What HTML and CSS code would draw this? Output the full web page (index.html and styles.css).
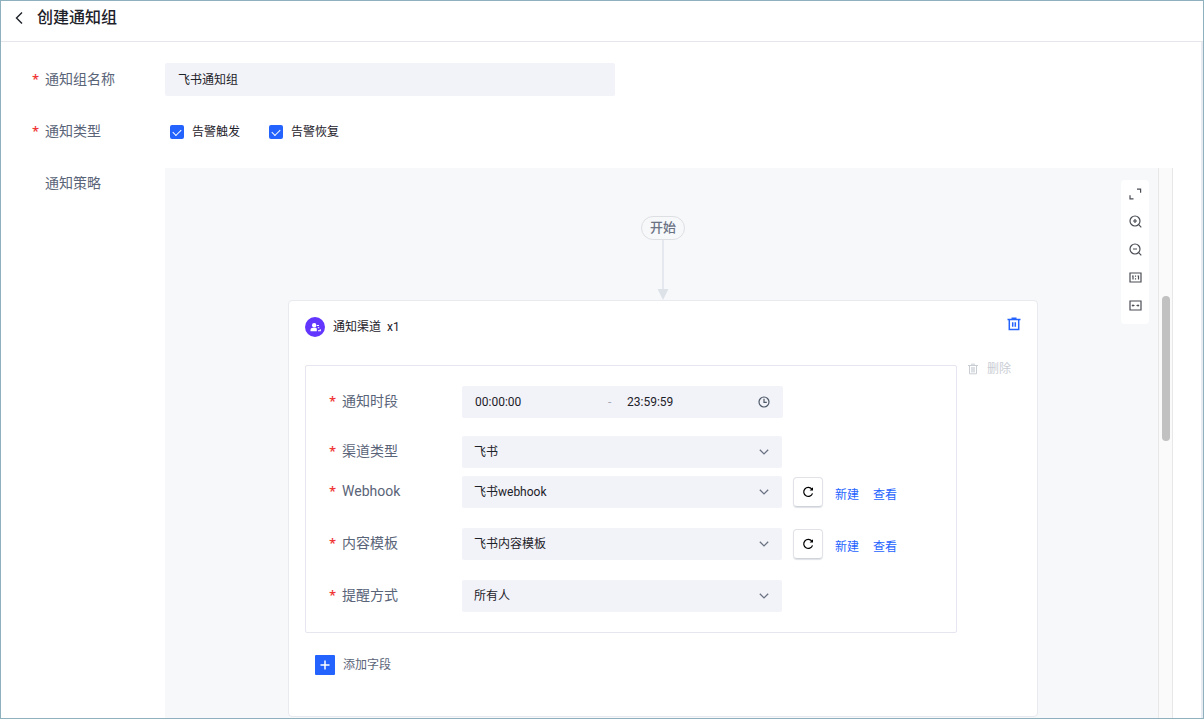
FILE: index.html
```html
<!DOCTYPE html>
<html lang="zh-CN">
<head>
<meta charset="utf-8">
<meta name="viewport" content="width=device-width, initial-scale=1">
<title>创建通知组</title>
<link rel="stylesheet" href="styles.css">
</head>
<body>
<div class="page">
  <header class="header">
    <button class="icon-btn back" type="button" aria-label="返回">
      <svg width="10" height="14" viewBox="0 0 10 14" fill="none" stroke="#1d2129" stroke-width="1.4"><path d="M8 1.5 2.5 7 8 12.500"/></svg>
    </button>
    <h1 class="title">创建通知组</h1>
  </header>

  <main class="form">
    <label class="label required" for="group-name">通知组名称</label>
    <input class="field name-field" id="group-name" type="text" value="飞书通知组">

    <span class="label required" id="type-label">通知类型</span>
    <div class="checks" role="group" aria-labelledby="type-label">
      <label class="check"><input type="checkbox" checked>告警触发</label>
      <label class="check"><input type="checkbox" checked>告警恢复</label>
    </div>

    <span class="label policy-label">通知策略</span>
    <div class="policy">
      <section class="canvas">
        <div class="start">开始</div>
        <svg class="arrow" width="12" height="60" viewBox="0 0 12 60"><path d="M6 0v50" stroke="#e5e8ef" stroke-width="2"/><path d="M.5 49h11L6 60z" fill="#dde2e9"/></svg>

        <article class="card">
          <div class="card-head">
            <svg width="20" height="20" viewBox="0 0 20 20"><circle cx="10" cy="10" r="10" fill="#6236ff"/><circle cx="9.200" cy="8.200" r="2.200" fill="#fff"/><path d="M5.500 14.200v-1.200c0-1.500 1-2.300 2.500-2.300h2c1.100 0 1.800.5 1.800 1.200v2.300z" fill="#fff"/><path d="M12 8.500h2M12.800 10.700h1.500M13 13.700h2.300v-1.500" stroke="#fff" stroke-width="1.100" fill="none"/></svg>
            <h2 class="card-title">通知渠道&nbsp; x1</h2>
            <button class="icon-btn remove-card" type="button" aria-label="删除通知渠道">
              <svg width="14" height="14" viewBox="0 0 14 14" fill="none" stroke="#2563ff" stroke-width="1.500"><path d="M.5 2.500h13M4.500 1.200h5M2.300 2.500v10h9.400v-10M5.700 5.200v4.600M8.300 5.200v4.600"/></svg>
            </button>
          </div>

          <div class="card-body">
            <div class="channel">
              <div class="row row-time">
                <label class="label required" for="time-from">通知时段</label>
                <div class="field time">
                  <input id="time-from" type="text" value="00:00:00">
                  <span class="dash">-</span>
                  <input type="text" value="23:59:59" aria-label="结束时间">
                  <svg width="12" height="12" viewBox="0 0 12 12" fill="none" stroke="#4e5969" stroke-width="1.200"><circle cx="6" cy="6" r="5"/><path d="M6 2.800V6.300h2.800"/></svg>
                </div>
              </div>
              <div class="row row-type">
                <label class="label required" for="channel-type">渠道类型</label>
                <div class="select">
                  <select class="field" id="channel-type"><option>飞书</option></select>
                  <svg class="chevron" width="10" height="6" viewBox="0 0 10 6"><path d="M.8.7 5 4.900 9.200.7"/></svg>
                </div>
              </div>
              <div class="row">
                <label class="label required" for="webhook">Webhook</label>
                <div class="select">
                  <select class="field" id="webhook"><option>飞书webhook</option></select>
                  <svg class="chevron" width="10" height="6" viewBox="0 0 10 6"><path d="M.8.7 5 4.900 9.200.7"/></svg>
                </div>
                <button class="refresh" type="button" aria-label="刷新">
                  <svg width="12" height="12" viewBox="0 0 12 12"><path d="M9.800 3.200A4.500 4.500 0 1 0 10.500 7.400" fill="none" stroke="#000" stroke-width="1.200"/><path d="M11 1.200v3.400H7.600z"/></svg>
                </button>
                <div class="links"><a href="#">新建</a><a href="#">查看</a></div>
              </div>
              <div class="row">
                <label class="label required" for="template">内容模板</label>
                <div class="select">
                  <select class="field" id="template"><option>飞书内容模板</option></select>
                  <svg class="chevron" width="10" height="6" viewBox="0 0 10 6"><path d="M.8.7 5 4.900 9.200.7"/></svg>
                </div>
                <button class="refresh" type="button" aria-label="刷新">
                  <svg width="12" height="12" viewBox="0 0 12 12"><path d="M9.800 3.200A4.500 4.500 0 1 0 10.500 7.400" fill="none" stroke="#000" stroke-width="1.200"/><path d="M11 1.200v3.400H7.600z"/></svg>
                </button>
                <div class="links"><a href="#">新建</a><a href="#">查看</a></div>
              </div>
              <div class="row">
                <label class="label required" for="remind">提醒方式</label>
                <div class="select">
                  <select class="field" id="remind"><option>所有人</option></select>
                  <svg class="chevron" width="10" height="6" viewBox="0 0 10 6"><path d="M.8.7 5 4.900 9.200.7"/></svg>
                </div>
              </div>
            </div>
            <button class="remove-row" type="button" disabled>
              <svg width="12" height="12" viewBox="0 0 12 12"><path d="M1 2.500h10M4 1.200h4M2.500 2.500v8.300h7V2.500" fill="none" stroke="#c9cdd4"/><path d="M4 4h4v5.500H4z" fill="#dcdfe4"/></svg>
              删除
            </button>
          </div>

          <button class="add" type="button">
            <svg width="20" height="20" viewBox="0 0 20 20"><rect width="20" height="20" rx="1" fill="#2563ff"/><path d="M5.500 10h9M10 5.500v9" stroke="#fff" stroke-width="1.500"/></svg>
            添加字段
          </button>
        </article>

        <div class="tools">
          <button class="icon-btn" type="button" aria-label="全屏"><svg width="14" height="14" viewBox="0 0 14 14"><path d="M9 2.200h3.600v3.600M5.500 11.800H2V8.200"/></svg></button>
          <button class="icon-btn" type="button" aria-label="放大"><svg width="14" height="14" viewBox="0 0 14 14"><circle cx="7" cy="6" r="5"/><path d="m10.700 9.700 2.600 2.600M5 6h4M7 4v4"/></svg></button>
          <button class="icon-btn" type="button" aria-label="缩小"><svg width="14" height="14" viewBox="0 0 14 14"><circle cx="7" cy="6" r="5"/><path d="m10.700 9.700 2.600 2.600M5 6h4"/></svg></button>
          <button class="icon-btn" type="button" aria-label="实际大小"><svg width="14" height="14" viewBox="0 0 14 14"><path d="M2 2h11v9H2zM4 5h1v3.500M9.500 5h1v3.500M7.500 4.500v1.200M7.500 7.300v1.200"/></svg></button>
          <button class="icon-btn" type="button" aria-label="适应画布"><svg width="14" height="14" viewBox="0 0 14 14"><path d="M2 2h11v9H2zM4 6.500h2.500M8.500 6.500H11"/><path class="solid" d="M3.500 6.500l1.800-1.500v3zM11.500 6.500 9.700 5v3z"/></svg></button>
        </div>
      </section>
      <div class="track"><div class="thumb"></div></div>
    </div>
  </main>
</div>
</body>
</html>
```
FILE: styles.css
```css
* {
  box-sizing: border-box;
}

body {
  margin: 0;
  font: 12px/20px Roboto, "Noto Sans CJK SC", sans-serif;
  color: #1d2129;
  background: #fff;
}

button,
input,
select {
  font: inherit;
  color: inherit;
}

button {
  padding: 0;
  border: 0;
  background: none;
}

svg {
  display: block;
  flex: none;
}

.page {
  display: flex;
  flex-direction: column;
  min-height: 100vh;
  border: 1px solid #8fb0bd;
}

.header {
  display: flex;
  align-items: center;
  gap: 13px;
  padding: 5px 13px 11px;
  border-bottom: 1px solid #e5e6eb;
}

.icon-btn {
  display: flex;
  align-items: center;
  justify-content: center;
}

.title {
  margin: 0;
  font-size: 16px;
  line-height: 24px;
  font-weight: 500;
}

.form {
  flex: 1;
  display: grid;
  grid-template-columns: 134px minmax(0, 1fr);
  grid-template-rows: auto auto 1fr;
  align-items: center;
  padding: 21px 28px 0 30px;
  border-right: 2px solid #e9ebf3;
}

.label {
  padding: 0 0 2px 14px;
  font-size: 14px;
  line-height: 20px;
  color: #5a6478;
  position: relative;
}

.required::before {
  content: "*";
  position: absolute;
  left: 1px;
  top: 0;
  font-family: "Open Sans", sans-serif;
  font-weight: 600;
  font-size: 13px;
  color: #f03535;
}

.field {
  height: 32px;
  border: 0;
  border-radius: 2px;
  background: #f2f3f8;
  padding: 0 12px;
}

.name-field {
  width: 450px;
  max-width: 100%;
  height: 33px;
  padding: 0 13px 2px;
}

.checks {
  display: flex;
  gap: 29px;
  padding: 26px 5px;
}

.check {
  display: flex;
  align-items: center;
  gap: 8px;
}

.check input {
  appearance: none;
  width: 14px;
  height: 14px;
  margin: 0;
  border-radius: 2px;
  background: #2563ff;
  display: grid;
  place-items: center;
}

.check input:checked::before {
  content: "";
  width: 7px;
  height: 4px;
  margin-bottom: 1px;
  border: solid #fff;
  border-width: 0 0 1px 1px;
  transform: rotate(-45deg);
}

.policy-label {
  align-self: start;
  padding-top: 5px;
}

.policy {
  align-self: stretch;
  display: flex;
}

.canvas {
  flex: 1;
  min-width: 0;
  position: relative;
  display: flex;
  flex-direction: column;
  align-items: center;
  padding: 48px 0 0 3px;
  background: #f7f8fa;
}

.start {
  padding: 0 8px;
  border: 1px solid #dddfe3;
  border-radius: 12px;
  font-size: 13px;
  line-height: 22px;
  font-weight: 500;
  color: #6b7385;
}

.card {
  width: 750px;
  max-width: 100%;
  padding: 16px 16px 41px;
  border: 1px solid #e8eaef;
  border-radius: 4px;
  background: #fff;
}

.card-head {
  display: flex;
  align-items: center;
  gap: 8px;
  margin-bottom: 28px;
}

.card-title {
  margin: 0;
  font-size: 12px;
  font-weight: 400;
}

.remove-card {
  margin-left: auto;
  padding-bottom: 6px;
}

.card-body {
  display: flex;
  align-items: flex-start;
  gap: 10px;
}

.channel {
  width: 652px;
  padding: 20px 22px;
  border: 1px solid #e5e6ef;
  border-radius: 2px;
  display: flex;
  flex-direction: column;
  gap: 20px;
}

.row {
  display: flex;
  align-items: center;
}

.row-time {
  margin-bottom: -2px;
}

.row-type {
  margin-bottom: -12px;
}

.row .label {
  width: 134px;
}

.time {
  width: 321px;
  display: flex;
  align-items: center;
  padding: 0 13px;
}

.time input {
  width: 122px;
  padding: 0;
  border: 0;
  background: none;
}

.dash {
  width: 30px;
  padding-left: 11px;
  color: #a5abb6;
}

.time svg {
  margin-left: auto;
}

.time input:first-child + .dash + input {
  flex: 1;
  min-width: 0;
}

.select {
  display: grid;
  align-items: center;
  width: 320px;
}

.select select {
  grid-area: 1 / 1;
  width: 100%;
  appearance: none;
}

.chevron {
  grid-area: 1 / 1;
  justify-self: end;
  margin-right: 13px;
  pointer-events: none;
  fill: none;
  stroke: #6b7385;
  stroke-width: 1.3;
}

.refresh {
  display: grid;
  place-items: center;
  width: 30px;
  height: 30px;
  margin-left: 11px;
  border: 1px solid #e0e2e8;
  border-bottom-color: #cfd3da;
  border-radius: 4px;
  box-shadow: 0 1px 1px #dfe2e7;
}

.links {
  display: flex;
  gap: 14px;
  padding: 5px 0 0 12px;
}

.links a {
  color: #2563ff;
  text-decoration: none;
}

.remove-row {
  display: flex;
  align-items: center;
  gap: 8px;
  margin-top: -6px;
  color: #c9cdd4;
}

.add {
  display: flex;
  align-items: center;
  gap: 8px;
  margin: 22px 0 0 10px;
  color: #5a6478;
}

.tools {
  position: absolute;
  top: 12px;
  right: 9px;
  width: 28px;
  padding: 0 0 4px;
  border-radius: 4px;
  background: #fff;
}

.tools .icon-btn {
  width: 28px;
  height: 28px;
}

.tools svg {
  fill: none;
  stroke: #4a4d55;
  stroke-width: 1.2;
}

.tools .solid {
  fill: #4a4d55;
  stroke: none;
}

.track {
  width: 15px;
  padding: 128px 0 0 3px;
  border: solid #e8e8e8;
  border-width: 0 1px;
  background: #fafafa;
}

.thumb {
  width: 8px;
  height: 145px;
  border-radius: 4px;
  background: #c1c1c1;
}
```
